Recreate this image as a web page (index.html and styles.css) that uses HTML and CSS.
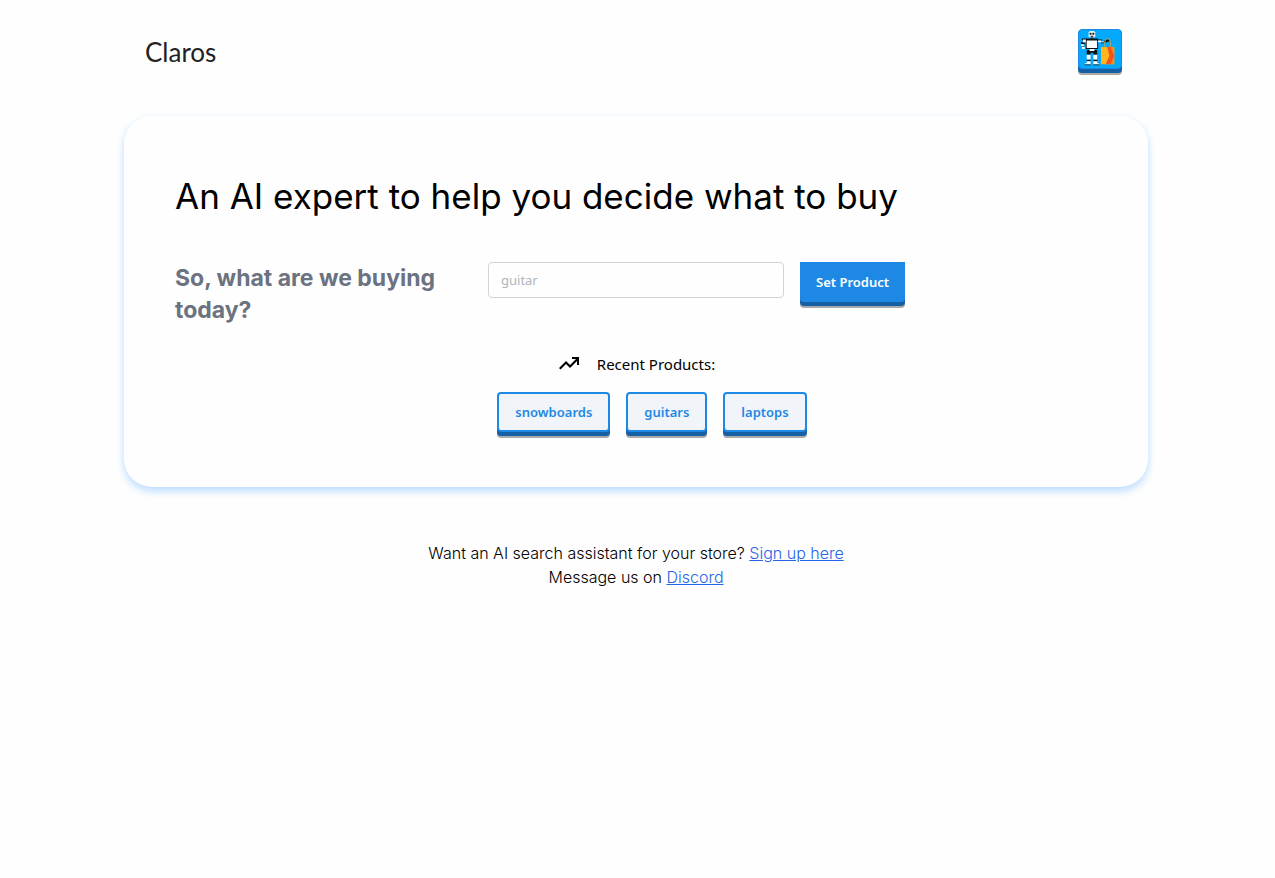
FILE: index.html
```html
<!DOCTYPE html>
<html lang="en">
<head>
<meta charset="utf-8">
<meta name="viewport" content="width=device-width, initial-scale=1">
<title>Claros</title>
<link rel="stylesheet" href="styles.css">
</head>
<body>
<div class="page">
  <header class="header">
    <a class="brand" href="#">Claros</a>
    <button class="avatar" type="button" aria-label="Claros assistant">
      <svg class="robot" viewBox="0 0 42 40" aria-hidden="true">
        <path fill="#111" d="M6 9h13v11H6zM2 9h4v2H2zM1 13h4v2H1zM2 17h2v1H2zM19 10h4v1h-4zM22 13h3v1h-3zM25 11h2v-1h4v2h-2v1h-4zM7 21h11v3H7zM7 24h4v2H7zM14 24h4v2h-4zM7 31h4v2H7zM14 31h4v2h-4zM5 36h6v1H5zM14 36h6v1h-6z"/>
        <path fill="#fff" d="M10 1h5v1h1v5h-1v1h-5V7H9V2h1zM7 11h11v8H7zM3 10h3v3H3zM1 15h3v2H1zM2 18h3v2H2zM19 11h3v2h-3zM22 12h3v1h-3zM10 20h5v2h-5zM7 26h4v5H7zM14 26h4v5h-4zM7 33h4v2H7zM14 33h4v2h-4zM5 35h6v1H5zM14 35h6v1h-6z"/>
        <path fill="#111" d="M10 3h2v2h-2zM13 3h2v2h-2zM11 6h3v1h-3zM11 8h3v1h-3z"/>
        <path d="M26 18v-5q0-4 3-4t3 4v5" fill="none" stroke="#b9a45a" stroke-width="1"/>
        <path fill="#ffb51d" d="M22 18h14v18H22z"/>
        <path fill="#ff8a12" d="M28 18h8v18h-9l4-9z"/>
        <path fill="#f4511e" d="M29 18h3l4 9-4 9h-5l4-9z"/>
      </svg>
    </button>
  </header>

  <main class="card">
    <h1 class="title">An AI expert to help you decide what to buy</h1>
    <form class="picker">
      <label class="question" for="product">So, what are we buying today?</label>
      <input class="field" id="product" type="text" placeholder="guitar">
      <button class="submit" type="button">Set Product</button>
    </form>
    <section class="recent">
      <h2 class="recent-title">
        <svg class="trend" viewBox="0 0 24 24" aria-hidden="true"><path d="M15 5v2h4l-6 6-4-4-7 7 1.500 1.500L9 12l4 4 7-7v4h2V5z"/></svg>
        Recent Products:
      </h2>
      <div class="chips">
        <button class="chip" type="button">snowboards</button>
        <button class="chip" type="button">guitars</button>
        <button class="chip" type="button">laptops</button>
      </div>
    </section>
  </main>

  <footer class="footer">
    <p>Want an AI search assistant for your store? <a href="#">Sign up here</a></p>
    <p>Message us on <a href="#">Discord</a></p>
  </footer>
</div>
</body>
</html>
```
FILE: styles.css
```css
* {
  box-sizing: border-box;
}

body {
  margin: 0;
  padding-right: 3px;
  background: #fefefe;
  color: #000;
  font-family: Inter, "Open Sans", sans-serif;
  font-size: 16px;
  line-height: 24px;
}

button,
input {
  font-family: "Noto Sans", sans-serif;
  font-size: 13px;
}

.page {
  max-width: 1024px;
  margin: 0 auto;
}

.header {
  display: flex;
  justify-content: space-between;
  align-items: center;
  padding: 29px 26px 40px 21px;
}

.brand {
  padding-bottom: 2px;
  color: #222;
  font-family: Lato, sans-serif;
  font-size: 26px;
  line-height: 32px;
  text-decoration: none;
}

.avatar {
  width: 44px;
  height: 40px;
  margin-bottom: 7px;
  padding: 0;
  border: 1px solid #1e88e5;
  border-radius: 4px;
  background: #03a9fc;
  box-shadow: 0 4px 0 #1560a5, 0 6px 0 #aaa;
}

.robot {
  display: block;
  width: 100%;
  height: 100%;
}

.card {
  padding: 56px 51px 55px;
  border-radius: 28px;
  background: #fefefe;
  box-shadow: 0 4px 8px #b8dbff;
}

.title {
  margin: 0 0 42px;
  font-size: 35px;
  font-weight: 400;
  line-height: 48px;
}

.picker {
  display: grid;
  grid-template-columns: 297px 296px max-content;
  column-gap: 16px;
  align-items: start;
}

.question {
  color: #6b7280;
  font-size: 23px;
  font-weight: 700;
  line-height: 32px;
}

.field {
  width: 100%;
  height: 36px;
  padding: 0 12px;
  border: 1px solid #ced4da;
  border-radius: 4px;
  background: #fefefe;
}

.field::placeholder {
  color: #adb5bd;
  opacity: 1;
}

.submit,
.chip {
  height: 40px;
  font-weight: 600;
  box-shadow: 0 4px 0 #1560a5, 0 6px 0 #aaa;
}

.submit {
  padding: 0 16px;
  border: 0;
  border-radius: 0 0 4px 4px;
  background: #1e88e5;
  color: #fff;
}

.recent {
  display: flex;
  flex-direction: column;
  align-items: center;
  gap: 16px;
  padding-top: 26px;
}

.recent-title {
  display: flex;
  align-items: center;
  gap: 16px;
  margin: 0;
  font-family: "Noto Sans", sans-serif;
  font-size: 15px;
  font-weight: 400;
  line-height: 24px;
}

.trend {
  width: 24px;
  height: 24px;
}

.chips {
  display: flex;
  gap: 16px;
  padding-left: 32px;
}

.chip {
  padding: 0 16px;
  border: 2px solid #1e88e5;
  border-radius: 4px;
  background: #f1f5f9;
  color: #1e88e5;
}

.footer {
  padding: 54px 0;
  font-weight: 300;
  text-align: center;
}

.footer p {
  margin: 0;
}

.footer a {
  color: #2563eb;
}
```
